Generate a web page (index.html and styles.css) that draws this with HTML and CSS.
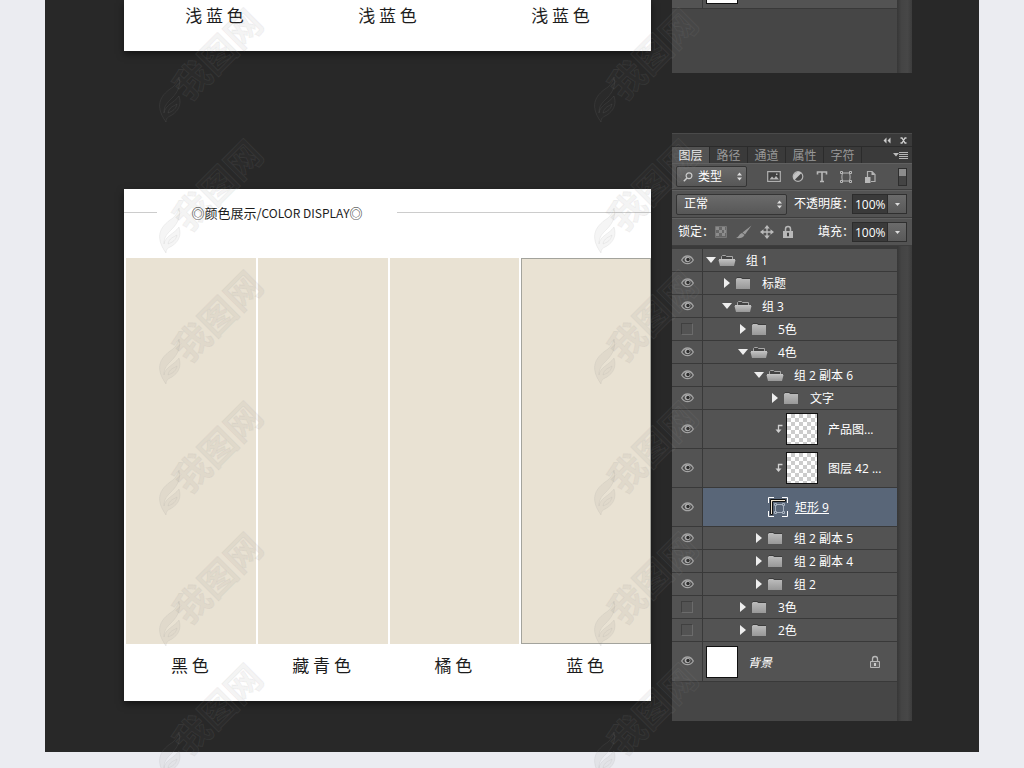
FILE: index.html
```html
<!DOCTYPE html>
<html lang="zh-CN">
<head>
<meta charset="utf-8">
<title>颜色展示</title>
<link rel="stylesheet" href="styles.css">
</head>
<body>
<svg class="sprite" aria-hidden="true">
  <defs>
    <linearGradient id="metal" x1="0" y1="0" x2="0" y2="1"><stop offset="0" stop-color="#bdbdbd"/><stop offset="1" stop-color="#989898"/></linearGradient>
    <symbol id="eye" viewBox="0 0 13 11">
      <path d="M.7 5C2.200 2.300 4 1 6.500 1s4.300 1.300 5.800 4C10.800 7.600 9 8.700 6.500 8.700S2.200 7.600.7 5z" fill="#4b4b4b" stroke="#a4a4a4" stroke-width="1.300"/>
      <circle cx="6.500" cy="4.500" r="2.800" fill="#b0b0b0"/><circle cx="7" cy="4.500" r="1.700" fill="#2c2c2c"/>
    </symbol>
    <symbol id="closed" viewBox="0 0 18 13">
      <path d="M2 12V2l1-1h4l1 1h8v10z" fill="url(#metal)"/><path d="M2 1.500 3 .500h4.500l1 1H16" fill="none" stroke="#3c3c3c"/>
    </symbol>
    <symbol id="open" viewBox="0 0 18 13">
      <path d="M3.500 6V2.500l1-1h3l1 1h6V6z" fill="#444" stroke="#a8a8a8"/>
      <path d="M.5 6h17L16 12H2z" fill="url(#metal)"/><path d="M1 5.500h16" stroke="#c4c4c4"/>
    </symbol>
    <symbol id="clip" viewBox="0 0 8 10"><path d="M7.500 1.500H3.500V7" fill="none" stroke="#d0d0d0" stroke-width="1.300"/><path d="M.5 5.500h6l-3 3.500z" fill="#d0d0d0"/></symbol>
    <symbol id="padlock" viewBox="0 0 12 14">
      <path d="M3.500 6V4a2.500 2.500 0 0 1 5 0v2" fill="none" stroke="#b8b8b8" stroke-width="1.500"/><path d="M1 6h10v7H1z" fill="#b8b8b8"/><path d="M5.500 8h1v3h-1z" fill="#444" stroke="#444"/>
    </symbol>
    <symbol id="mark" viewBox="0 0 120 124">
      <g class="mark-ink">
        <text transform="translate(35 98) rotate(-45)">我图网</text>
        <path d="M12 118C-1 100 8 90 19 83c3-3 5-6 6-10 2 8-1 15-7 21-5 5-8 8-8 15 1-8 10-10 15-17 3 9-1 15-7 19-4 2-6 3-6 7zM14 109c1-6 6-7 9-9-1 5-4 7-9 9z"/>
      </g>
    </symbol>
  </defs>
</svg>

<main class="stage">
  <div class="board top-board">
    <section class="poster poster-tail">
      <div class="labels three"><span>浅 蓝 色</span><span>浅 蓝 色</span><span>浅 蓝 色</span></div>
    </section>
    <aside class="panel panel-tail">
      <div class="list-wrap">
        <div class="list"><div class="tail-row"><span class="tail-eye"></span><span class="tail-thumb"></span></div></div>
        <div class="track"></div>
      </div>
    </aside>
  </div>

  <div class="board">
    <section class="poster poster-full">
      <header class="heading"><i class="rule short"></i><h1>◎颜色展示/<small>COLOR DISPLAY</small>◎</h1><i class="rule"></i></header>
      <div class="swatches"><div></div><div></div><div></div><div class="picked"></div></div>
      <div class="labels four"><span>黑 色</span><span>藏 青 色</span><span>橘 色</span><span>蓝 色</span></div>
    </section>

    <aside class="panel">
      <div class="titlebar">
        <button aria-label="折叠"><svg width="8" height="7" viewBox="0 0 8 7"><path d="M3.500.500v6L.5 3.500zM7.500.500v6l-3-3z" fill="#ccc"/></svg></button>
        <button aria-label="关闭"><svg width="7" height="7" viewBox="0 0 7 7"><path d="M.5 1h1.500L5 6h1.500M6.500 1H5L2 6H.500" fill="none" stroke="#d0d0d0" stroke-width="1.300"/></svg></button>
      </div>
      <nav class="tabs">
        <button class="active">图层</button><button>路径</button><button>通道</button><button>属性</button><button>字符</button>
        <button class="menu" aria-label="菜单"><svg width="15" height="9" viewBox="0 0 15 9"><path d="M0 2h6L3 5.500z" fill="#bbb"/><path d="M6 1.500h9M6 3.500h9M6 5.500h9M6 7.500h9" stroke="#b5b5b5"/></svg></button>
      </nav>
      <div class="bar filters">
        <label class="drop kind">
          <svg class="search" width="10" height="10" viewBox="0 0 10 10"><circle cx="6" cy="3.800" r="2.900" fill="none" stroke="#ccc" stroke-width="1.200"/><path d="M4 6 .8 9.200" stroke="#ccc" stroke-width="1.500"/></svg>
          <select aria-label="筛选类型"><option>类型</option></select>
          <svg class="updown" width="5" height="9" viewBox="0 0 5 9"><path d="M0 3.500 2.500.500 5 3.500zM0 5.500h5L2.500 8.500z" fill="#ddd"/></svg>
        </label>
        <div class="filter-icons">
          <button aria-label="像素"><svg width="14" height="14" viewBox="0 0 14 14"><path d="M.7 1.700h12.600v9.600H.700z" fill="#3f3f3f" stroke="#b0b0b0" stroke-width="1.200"/><path d="M2.500 9.500 5 6.500l2 2 2-2.500 3 3.500zM9 3.500h1.500V5H9z" fill="#b8b8b8"/></svg></button>
          <button aria-label="调整"><svg width="14" height="14" viewBox="0 0 14 14"><circle cx="7" cy="6.500" r="4.800" fill="#484848" stroke="#b4b4b4" stroke-width="1.200"/><path d="M3.500 10A5 5 0 0 1 10.500 3z" fill="#c4c4c4"/></svg></button>
          <button aria-label="文字图层"><svg width="14" height="14" viewBox="0 0 14 14"><path d="M2.500 4.500V2h9v2.500M7 2v9.500M5 11.500h4" fill="none" stroke="#b8b8b8" stroke-width="1.600"/></svg></button>
          <button aria-label="形状"><svg width="14" height="14" viewBox="0 0 14 14"><path d="M3 3h8M3 11h8M3.500 3c-.8 3-.8 5 0 8M10.500 3c.8 3 .8 5 0 8" fill="none" stroke="#b8b8b8"/><path d="M1.500 1.500h2v2h-2zM10.500 1.500h2v2h-2zM1.500 10.500h2v2h-2zM10.500 10.500h2v2h-2z" fill="#535353" stroke="#b8b8b8"/></svg></button>
          <button aria-label="智能对象"><svg width="14" height="14" viewBox="0 0 14 14"><path d="M4.500 7V1.500h4.500L12 4.500v7H8" fill="none" stroke="#b0b0b0" stroke-width="1.200"/><path d="M8.500 1v4H12M2 7h5.500v6H2z" fill="#b8b8b8"/></svg></button>
        </div>
        <button class="switch" aria-label="筛选开关"></button>
      </div>
      <div class="bar">
        <label class="drop blend">
          <select aria-label="混合模式"><option>正常</option></select>
          <svg class="updown" width="5" height="9" viewBox="0 0 5 9"><path d="M0 3.500 2.500.500 5 3.500zM0 5.500h5L2.500 8.500z" fill="#ddd"/></svg>
        </label>
        <label class="value" for="opacity">不透明度：</label>
        <input id="opacity" type="text" value="100%"><button class="arrow" aria-label="不透明度"><svg width="5" height="3" viewBox="0 0 5 3"><path d="M0 0h5L2.500 3z" fill="#ddd"/></svg></button>
      </div>
      <div class="bar">
        <span class="lock-label">锁定：</span>
        <div class="locks">
          <button aria-label="锁定透明像素"><svg width="14" height="14" viewBox="0 0 14 14"><path d="M1.500 1.500h11v11h-11z" fill="#666" stroke="#777"/><path d="M2 2h3v3H2zM8 2h3v3H8zM5 5h3v3H5zM10 5h2v3h-2zM2 8h3v3H2zM8 8h3v3H8z" fill="#8c8c8c"/></svg></button>
          <button aria-label="锁定图像像素"><svg width="16" height="14" viewBox="0 0 16 14"><path d="M15.500.5 9 9.500 6.500 7.500z" fill="#999"/><path d="M6 8l2.500 2C7 13 4 13.500 0 13c3-1 3-4 6-5z" fill="#999"/></svg></button>
          <button aria-label="锁定位置"><svg width="14" height="14" viewBox="0 0 14 14"><path d="M7 2v10M2 7h10" stroke="#bbb" stroke-width="1.300"/><path d="M7 0l2.800 3.500H4.200zM7 14l2.800-3.500H4.200zM0 7l3.500-2.800v5.600zM14 7l-3.500-2.800v5.600z" fill="#bbb"/></svg></button>
          <button aria-label="锁定全部"><svg width="12" height="14"><use href="#padlock"/></svg></button>
        </div>
        <label class="value" for="fill">填充：</label>
        <input id="fill" type="text" value="100%"><button class="arrow" aria-label="填充"><svg width="5" height="3" viewBox="0 0 5 3"><path d="M0 0h5L2.500 3z" fill="#ddd"/></svg></button>
      </div>
      <div class="list-wrap">
        <ul class="list">
          <li class="row"><button class="vis" aria-label="可见"><svg><use href="#eye"/></svg></button><div class="item l0"><button class="twist down" aria-label="收起"></button><svg class="folder"><use href="#open"/></svg><span>组 1</span></div></li>
          <li class="row"><button class="vis" aria-label="可见"><svg><use href="#eye"/></svg></button><div class="item l1"><button class="twist" aria-label="展开"></button><svg class="folder"><use href="#closed"/></svg><span>标题</span></div></li>
          <li class="row"><button class="vis" aria-label="可见"><svg><use href="#eye"/></svg></button><div class="item l1"><button class="twist down" aria-label="收起"></button><svg class="folder"><use href="#open"/></svg><span>组 3</span></div></li>
          <li class="row"><button class="vis" aria-label="隐藏"><i></i></button><div class="item l2"><button class="twist" aria-label="展开"></button><svg class="folder"><use href="#closed"/></svg><span>5色</span></div></li>
          <li class="row"><button class="vis" aria-label="可见"><svg><use href="#eye"/></svg></button><div class="item l2"><button class="twist down" aria-label="收起"></button><svg class="folder"><use href="#open"/></svg><span>4色</span></div></li>
          <li class="row"><button class="vis" aria-label="可见"><svg><use href="#eye"/></svg></button><div class="item l3"><button class="twist down" aria-label="收起"></button><svg class="folder"><use href="#open"/></svg><span>组 2 副本 6</span></div></li>
          <li class="row"><button class="vis" aria-label="可见"><svg><use href="#eye"/></svg></button><div class="item l4"><button class="twist" aria-label="展开"></button><svg class="folder"><use href="#closed"/></svg><span>文字</span></div></li>
          <li class="row tall"><button class="vis" aria-label="可见"><svg><use href="#eye"/></svg></button><div class="item clipped"><svg class="clip"><use href="#clip"/></svg><span class="thumb checks"></span><span>产品图...</span></div></li>
          <li class="row tall"><button class="vis" aria-label="可见"><svg><use href="#eye"/></svg></button><div class="item clipped"><svg class="clip"><use href="#clip"/></svg><span class="thumb checks"></span><span>图层 42 ...</span></div></li>
          <li class="row tall selected"><button class="vis" aria-label="可见"><svg><use href="#eye"/></svg></button><div class="item shape"><svg width="20" height="20" viewBox="0 0 20 20"><path d="M.5 6V.500H6M14 .500h5.500V6M19.500 14v5.500H14M6 19.500H.500V14" fill="none" stroke="#fff"/><path d="M2.500 2.500h15v2h-13v13h-2z" fill="#eee3d0" stroke="#111"/><path d="M7.500 7.500h8v8h-8z" fill="none" stroke="#a9b3c0"/><path d="M6.500 6.500h2v2h-2zM14.500 6.500h2v2h-2zM6.500 14.500h2v2h-2zM14.500 14.500h2v2h-2z" fill="#596678" stroke="#a9b3c0"/></svg><span>矩形 9</span></div></li>
          <li class="row"><button class="vis" aria-label="可见"><svg><use href="#eye"/></svg></button><div class="item l3"><button class="twist" aria-label="展开"></button><svg class="folder"><use href="#closed"/></svg><span>组 2 副本 5</span></div></li>
          <li class="row"><button class="vis" aria-label="可见"><svg><use href="#eye"/></svg></button><div class="item l3"><button class="twist" aria-label="展开"></button><svg class="folder"><use href="#closed"/></svg><span>组 2 副本 4</span></div></li>
          <li class="row"><button class="vis" aria-label="可见"><svg><use href="#eye"/></svg></button><div class="item l3"><button class="twist" aria-label="展开"></button><svg class="folder"><use href="#closed"/></svg><span>组 2</span></div></li>
          <li class="row"><button class="vis" aria-label="隐藏"><i></i></button><div class="item l2"><button class="twist" aria-label="展开"></button><svg class="folder"><use href="#closed"/></svg><span>3色</span></div></li>
          <li class="row"><button class="vis" aria-label="隐藏"><i></i></button><div class="item l2"><button class="twist" aria-label="展开"></button><svg class="folder"><use href="#closed"/></svg><span>2色</span></div></li>
          <li class="row tall base"><button class="vis" aria-label="可见"><svg><use href="#eye"/></svg></button><div class="item l0"><span class="thumb"></span><em>背景</em><svg class="locked" width="12" height="14" viewBox="0 0 12 14"><path d="M3.500 6V4a2.500 2.500 0 0 1 5 0v2" fill="none" stroke="#b8b8b8" stroke-width="1.300"/><path d="M1.500 6.500h9v6h-9z" fill="#666" stroke="#b8b8b8"/><path d="M5 8h2v3H5z" fill="#ccc"/></svg></div></li>
        </ul>
        <div class="track"></div>
      </div>
    </aside>
  </div>
</main>

<div class="marks" aria-hidden="true">
  <svg><use href="#mark"/></svg><svg><use href="#mark"/></svg>
  <svg><use href="#mark"/></svg><svg><use href="#mark"/></svg>
  <svg><use href="#mark"/></svg><svg><use href="#mark"/></svg>
  <svg><use href="#mark"/></svg><svg><use href="#mark"/></svg>
  <svg><use href="#mark"/></svg><svg><use href="#mark"/></svg>
  <svg><use href="#mark"/></svg><svg><use href="#mark"/></svg>
</div>
</body>
</html>
```

FILE: styles.css
```css
* { box-sizing: border-box; }
body {
  margin: 0;
  padding: 0 45px 16px;
  position: relative;
  overflow: hidden;
  background: #ebecf1;
  color: #1c1c1c;
  font-family: "Noto Sans CJK SC", sans-serif;
}
button { margin: 0; padding: 0; border: 0; background: none; font: inherit; color: inherit; display: flex; align-items: center; justify-content: center; }
svg { display: block; flex: none; }
.sprite { position: absolute; width: 0; height: 0; }

.stage { background: #282828; padding: 0 67px 31px 79px; }
.board { display: flex; gap: 21px; align-items: flex-start; }
.top-board { margin-bottom: 60px; }

.poster { flex: 1; background: #fff; box-shadow: 0 3px 7px rgba(0, 0, 0, .5); }
.poster-tail { padding: 3px 4px 24px; }
.poster-full { margin-top: 56px; padding-bottom: 24px; }
.labels { display: grid; font-size: 17px; line-height: 24px; text-align: center; }
.three { grid-template-columns: repeat(3, 1fr); }
.four { grid-template-columns: repeat(4, 1fr); padding-top: 9px; }
.heading { display: flex; align-items: center; height: 47px; margin-bottom: 22px; }
.heading h1 { flex: none; width: 240px; margin: 0; text-align: center; font-size: 13px; font-weight: 400; line-height: 20px; }
.heading small { font-size: 12px; }
.rule { flex: 1; height: 1px; background: #ccc; }
.short { flex: 0 0 33px; }
.swatches { display: grid; grid-template-columns: repeat(4, 1fr); gap: 2px; height: 386px; padding-left: 2px; }
.swatches div { background: #e9e2d3; }
.swatches .picked { border: 1px solid #a3a39c; }

.panel { flex: 0 0 240px; background: #535353; color: #fff; font: 12px/16px "Open Sans", "Noto Sans CJK SC", sans-serif; }
.titlebar { display: flex; justify-content: flex-end; gap: 9px; height: 13px; padding-right: 5px; background: #3a3a3a; border-top: 1px solid #4a4a4a; }
.tabs { display: flex; height: 17px; background: #3a3a3a; color: #989898; border-top: 1px solid #2b2b2b; }
.tabs button { width: 38px; border-right: 1px solid #2b2b2b; padding-top: 1px; }
.tabs .active { background: #535353; color: #eee; }
.tabs .menu { flex: 1; border: 0; justify-content: flex-end; padding-right: 4px; }
.bar { display: flex; align-items: center; height: 28px; padding: 0 5px 0 4px; border-bottom: 1px solid #3d3d3d; border-top: 1px solid #606060; }
.filters { height: 27px; }
.drop { position: relative; display: flex; align-items: center; height: 21px; border: 1px solid #343434; border-radius: 2px; background: linear-gradient(#6b6b6b, #575757); }
.drop select { appearance: none; width: 100%; height: 19px; padding: 0 7px; border: 0; background: none; color: #fff; font: inherit; }
.kind { width: 71px; }
.kind select { padding-left: 21px; }
.blend { width: 111px; }
.search { position: absolute; left: 6px; }
.updown { position: absolute; right: 4px; }
.filter-icons { display: flex; gap: 10px; margin-left: 20px; }
.switch { width: 9px; height: 18px; margin-left: auto; border: 1px solid #2e2e2e; background: linear-gradient(#8c8c8c 0 45%, #444 45%); }
.value { margin-left: auto; white-space: nowrap; margin-right: -6px; }
.bar input { width: 36px; height: 20px; padding: 0 0 0 2px; border: 1px solid #2c2c2c; background: #3a3a3a; color: #fff; font: inherit; border-radius: 0; margin-left: 4px; }
.arrow { width: 19px; height: 20px; border: 1px solid #2f2f2f; border-left: 0; background: linear-gradient(#6b6b6b, #595959); }
.lock-label { width: 38px; padding-left: 2px; white-space: nowrap; overflow: visible; }
.locks { display: flex; gap: 8px; }

.list-wrap { display: flex; background: #464646; }
.list { flex: 1; margin: 0; padding: 0 0 39px; list-style: none; }
.panel:not(.panel-tail) .list { border-top: 3px solid #3a3a3a; }
.track { width: 15px; background: linear-gradient(90deg, #373737, #444 30%, #474747 70%, #3c3c3c); }
.row { display: flex; height: 23px; background: #535353; border-bottom: 1px solid #393939; }
.tall { height: 39px; }
.base { height: 40px; }
.vis { width: 31px; border-right: 1px solid #393939; }
.vis svg { width: 13px; height: 11px; }
.vis i { width: 12px; height: 12px; border: 1px solid #6b6b6b; border-color: #404040 #6b6b6b #6b6b6b #404040; }
.item { flex: 1; display: flex; align-items: center; white-space: nowrap; padding-left: 3px; }
.item > span:last-child, .item em { padding-top: 2px; }
.l1 { padding-left: 19px; }
.l2 { padding-left: 35px; }
.l3 { padding-left: 51px; }
.l4 { padding-left: 67px; }
.twist { width: 10px; height: 10px; }
.twist::before { content: ""; border-left: 6px solid #eee; border-top: 5px solid transparent; border-bottom: 5px solid transparent; }
.down::before { border: 5px solid transparent; border-top: 6px solid #eee; border-bottom: 0; }
.folder { width: 18px; height: 13px; margin: 0 10px 0 2px; }
.clipped { padding-left: 72px; }
.clip { width: 8px; height: 10px; margin-right: 3px; }
.thumb { flex: none; width: 32px; height: 32px; margin-right: 10px; border: 1px solid #111; background: #fff; }
.checks { background: repeating-conic-gradient(#ccc 0 25%, #fff 0 50%) 0 0 / 8px 8px; }
.selected .item { background: #596678; }
.shape { padding-left: 65px; gap: 7px; }
.shape span { text-decoration: underline; }
.locked { margin: 0 16px 0 auto; }
.panel-tail .list { padding-bottom: 64px; }
.tail-row { display: flex; height: 9px; background: #535353; border-bottom: 1px solid #393939; }
.tail-eye { width: 31px; border-right: 1px solid #393939; }
.tail-thumb { width: 32px; height: 4px; margin-left: 3px; background: #fff; border: 1px solid #111; border-top: 0; }

/* Repeating watermark laid over the whole page */
.marks { position: absolute; inset: 4px 0 auto 154px; display: grid; grid-template-columns: 120px 120px; column-gap: 315px; row-gap: 7px; pointer-events: none; }
.marks svg { width: 120px; height: 124px; }
.mark-ink { fill: rgba(90, 90, 90, .06); stroke: rgba(150, 150, 150, .12); stroke-width: 1; font: 700 36px "Noto Sans CJK SC", sans-serif; }
```
